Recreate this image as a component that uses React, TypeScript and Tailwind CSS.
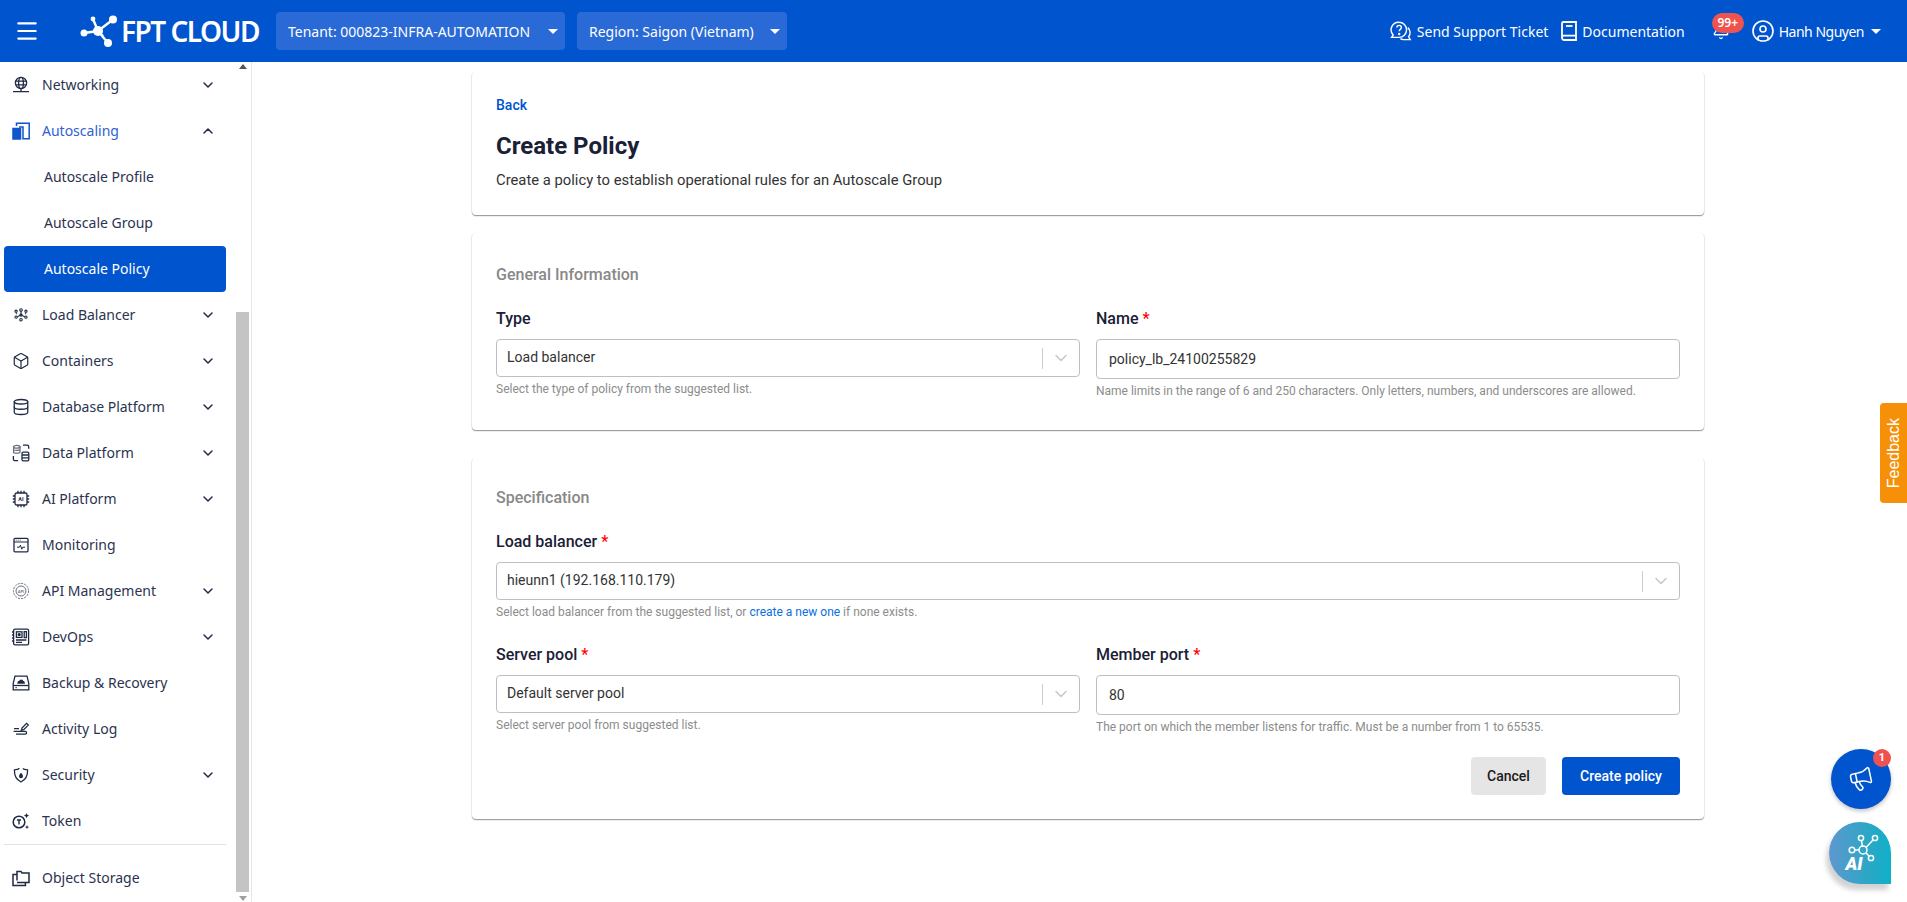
import type { ReactNode } from "react";
import { Bell, Box, ChevronDown, ChevronUp, CircleUser, Database, Megaphone, Menu } from "lucide-react";

const ink = "#1f2a44";

function Svg({ children, className }: { children: ReactNode; className?: string }) {
  return (
    <svg viewBox="0 0 18 18" width="18" height="18" fill="none" stroke={ink} strokeWidth="1.3" className={className}>
      {children}
    </svg>
  );
}

const NetworkIcon = () => (
  <Svg>
    <circle cx="9" cy="7" r="5.6" />
    <ellipse cx="9" cy="7" rx="2.4" ry="5.6" />
    <path d="M3.6 5.2h10.8M3.6 8.8h10.8M9 12.6v2.8M1 15.6h16" />
  </Svg>
);
const AutoscaleIcon = () => (
  <svg viewBox="0 0 18 18" width="18" height="18" fill="none" stroke="#0f55cc" strokeWidth="1.5">
    <path d="M1 6.5h7.5V17H1z" fill="#0f55cc" />
    <path d="M4.5 4V1.2h12.7V16.8H11V5h-4" />
  </svg>
);
const BalancerIcon = () => (
  <Svg className="scale-[0.85]">
    <circle cx="9" cy="3.2" r="1.5" />
    <circle cx="3.2" cy="4.6" r="1.3" />
    <circle cx="14.8" cy="4.6" r="1.3" />
    <circle cx="3.2" cy="11.5" r="1.3" />
    <circle cx="14.8" cy="11.5" r="1.3" />
    <circle cx="9" cy="14.6" r="1.5" />
    <circle cx="9" cy="9" r="1.3" fill={ink} />
    <path d="M9 5v2.6M4.5 11l3.2-1.4M13.5 11l-3.2-1.4M3 7.6h1.4M13.6 7.6H15" />
  </Svg>
);
const DataIcon = () => (
  <Svg>
    <ellipse cx="4.8" cy="2.8" rx="3.2" ry="1.4" stroke="#6b7280" />
    <path d="M1.6 2.8v5.6c0 .9 6.4.9 6.4 0V2.8M1.6 5.6c0 .9 6.4.9 6.4 0" stroke="#6b7280" />
    <path d="M11 1.2h4.2a1.5 1.5 0 0 1 1.5 1.5v2M1.4 12v3a1.7 1.7 0 0 0 1.7 1.7h3" />
    <rect x="10" y="8.2" width="6.8" height="8.6" rx="1.2" />
    <path d="M10 11h6.8M10 13.9h6.8" />
  </Svg>
);
const CpuIcon = () => (
  <Svg>
    <rect x="3" y="3" width="12" height="12" rx="1.6" />
    <path d="M6 .8V3M9 .8V3M12 .8V3M6 15v2.2M9 15v2.2M12 15v2.2M.8 6H3M.8 9H3M.8 12H3M15 6h2.2M15 9h2.2M15 12h2.2" />
    <text x="9" y="11" textAnchor="middle" fontSize="5.5" fontWeight="700" fill={ink} stroke="none" fontFamily="Roboto, sans-serif">
      AI
    </text>
  </Svg>
);
const MonitorIcon = () => (
  <Svg>
    <rect x="2" y="2.4" width="14" height="13.4" rx="1" />
    <path d="M2 6h14M3.8 4.2h.8M5.8 4.2h.8M7.8 4.2h.8M5 11.2h2.4l1-2 1.4 4 1-2H13" strokeWidth="1" />
  </Svg>
);
const ApiIcon = () => (
  <Svg>
    <g stroke="#6b7280" strokeWidth="1">
      <circle cx="9" cy="9" r="5" />
      <circle cx="9" cy="9" r="7.6" strokeDasharray="2.2 1" />
      <text x="9" y="10.6" textAnchor="middle" fontSize="4" fontWeight="700" fill="#6b7280" stroke="none" fontFamily="Roboto, sans-serif">
        API
      </text>
    </g>
  </Svg>
);
const DevOpsIcon = () => (
  <Svg>
    <rect x="1.6" y="1.2" width="15" height="15.6" rx="1.4" />
    <path d="M0 4h1.6M0 7h1.6M0 10h1.6M0 13h1.6" />
    <rect x="4.4" y="3.8" width="5.6" height="5.6" />
    <circle cx="7.2" cy="6.6" r="1" fill={ink} />
    <path d="M12.2 3.6h2.2v6h-2.2zM4 12h10.4M4 14.4h6" />
  </Svg>
);
const BackupIcon = () => (
  <Svg>
    <path d="M1.2 9.5 3 2.2h12l1.8 7.3v6.3H1.2z" />
    <path d="M1.2 11.5h15.6" />
    <path d="M6 9c0-1.4 1-1.6 1.6-1.6C8 5.7 10.4 5.7 10.8 7.4c.8 0 1.4.6 1.4 1.6z" fill={ink} />
    <path d="M3.5 13.6h1.2" />
  </Svg>
);
const LogIcon = () => (
  <Svg>
    <path d="m10 8 4.6-4.6 1.7 1.7L11.7 9.7l-2.4.6z" />
    <path d="M2 8.6h5M1.6 11.4h11.6c1.8 0 1.8 2.8 0 2.8H4" />
  </Svg>
);
const ShieldIcon = () => (
  <Svg>
    <path d="M2.4 3.6c2.5.4 3.8-.3 5-1.4M15.6 3.6C13 4 11.8 3.3 10.8 2.4M15.6 3.6c.2 6-1.6 10.2-6.6 12.4C4 13.8 2.2 9.6 2.4 3.6" />
    <path d="M9 6.8c1.4 1.6 2 2.4 2 3.4a2 2 0 0 1-4 0c0-1 .6-1.8 2-3.4z" fill={ink} stroke="none" />
  </Svg>
);
const TokenIcon = () => (
  <Svg>
    <circle cx="7" cy="10" r="5.8" strokeWidth="1.5" />
    <path d="M5 8h4M7 8v4.4" strokeWidth="1.4" />
    <path d="m14.5 1 .8 1.8 1.8.8-1.8.8-.8 1.8-.8-1.8-1.8-.8 1.8-.8zM15 13l.6 1.5 1.5.6-1.5.6-.6 1.5-.6-1.5-1.5-.6 1.5-.6z" fill={ink} stroke="none" />
  </Svg>
);
const StorageIcon = () => (
  <Svg>
    <path d="M5 11.6V2.4h4l1 1.6h7v9.4H5" strokeWidth="1.5" />
    <path d="M5 5.6H1v10.8h12.4v-3" strokeWidth="1.5" />
  </Svg>
);

type NavRow = { label: string; icon: ReactNode; chevron?: boolean };

const upperRows: NavRow[] = [
  { label: "Load Balancer", icon: <BalancerIcon />, chevron: true },
  { label: "Containers", icon: <Box size={18} color={ink} strokeWidth={1.6} />, chevron: true },
  { label: "Database Platform", icon: <Database size={18} color={ink} strokeWidth={1.7} />, chevron: true },
  { label: "Data Platform", icon: <DataIcon />, chevron: true },
  { label: "AI Platform", icon: <CpuIcon />, chevron: true },
  { label: "Monitoring", icon: <MonitorIcon /> },
  { label: "API Management", icon: <ApiIcon />, chevron: true },
  { label: "DevOps", icon: <DevOpsIcon />, chevron: true },
  { label: "Backup & Recovery", icon: <BackupIcon /> },
  { label: "Activity Log", icon: <LogIcon /> },
  { label: "Security", icon: <ShieldIcon />, chevron: true },
  { label: "Token", icon: <TokenIcon /> },
];

function Row({ label, icon, chevron }: NavRow) {
  return (
    <div className="flex h-[46px] items-center pl-2 pr-[10px] text-[14px] text-[#2c3350]">
      <span className="flex w-[18px] justify-center">{icon}</span>
      <span className="mb-[2px] ml-3 flex-1">{label}</span>
      {chevron ? <ChevronDown size={16} strokeWidth={2.2} color={ink} /> : null}
    </div>
  );
}

function Sidebar() {
  return (
    <aside className="flex h-full w-[252px] shrink-0 border-r border-[#e5e7eb] font-['Noto_Sans',sans-serif]">
      <nav className="w-[236px] shrink-0 pl-1 pr-[10px]">
        <Row label="Networking" icon={<NetworkIcon />} chevron />
        <div className="flex h-[46px] items-center pl-2 pr-[10px] text-[14px] text-[#2f62d6]">
          <span className="flex w-[18px] justify-center">
            <AutoscaleIcon />
          </span>
          <span className="mb-[2px] ml-3 flex-1">Autoscaling</span>
          <ChevronUp size={16} strokeWidth={2.2} color={ink} />
        </div>
        <div className="flex h-[46px] items-center pb-[2px] pl-10 text-[14px] text-[#2c3350]">Autoscale Profile</div>
        <div className="flex h-[46px] items-center pb-[2px] pl-10 text-[14px] text-[#2c3350]">Autoscale Group</div>
        <div className="flex h-[46px] items-center rounded-[4px] bg-[#0054ce] pb-[2px] pl-10 text-[14px] text-white">Autoscale Policy</div>
        {upperRows.map((row) => (
          <Row key={row.label} {...row} />
        ))}
        <div className="mb-[10px] h-px bg-[#dfe3ea]" />
        <Row label="Object Storage" icon={<StorageIcon />} />
      </nav>
      <div className="flex w-[13px] shrink-0 flex-col items-center">
        <div className="mt-[2px] h-0 w-0 border-x-[4px] border-b-[5px] border-x-transparent border-b-[#555]" />
        <div className="mt-[243px] h-[580px] w-full bg-[#c4c4c4]" />
        <div className="mt-[4px] h-0 w-0 border-x-[4px] border-t-[5px] border-x-transparent border-t-[#a0a0a0]" />
      </div>
    </aside>
  );
}

function Caret() {
  return <div className="h-0 w-0 border-x-[5px] border-t-[5px] border-x-transparent border-t-white" />;
}

function HeaderSelect({ label, className }: { label: string; className: string }) {
  return (
    <div className={`flex h-[38px] items-center justify-between rounded-[4px] bg-[#2a6ad6] pl-3 pr-[7px] text-[14px] text-white ${className}`}>
      <span>{label}</span>
      <Caret />
    </div>
  );
}

function Logo() {
  return (
    <div className="ml-10 flex w-[182px] items-center">
      <svg viewBox="0 0 40 32" width="40" height="32" fill="white" stroke="white" strokeWidth="2.4" className="shrink-0">
        <path d="M18 16 33 4.5M18 16 4 18M18 16l10 12M18 16 13 4M18 16l5 5" />
        <circle cx="18" cy="16" r="5" stroke="none" />
        <circle cx="33" cy="4.5" r="4" stroke="none" />
        <circle cx="4" cy="18" r="3.5" stroke="none" />
        <circle cx="28" cy="28" r="4" stroke="none" />
        <circle cx="13" cy="4" r="2.4" stroke="none" />
      </svg>
      <span className="ml-px whitespace-nowrap font-['Noto_Sans',sans-serif] text-[28px] font-semibold leading-none tracking-[-1.5px] text-white">
        FPT CLOUD
      </span>
    </div>
  );
}

function Header() {
  return (
    <header className="flex h-[62px] shrink-0 items-center bg-[#0054ce] font-['Noto_Sans',sans-serif]">
      <Menu size={26} color="white" strokeWidth={2} className="ml-[14px]" />
      <Logo />
      <HeaderSelect label="Tenant: 000823-INFRA-AUTOMATION" className="ml-[14px] w-[289px]" />
      <HeaderSelect label="Region: Saigon (Vietnam)" className="ml-[12px] w-[210px]" />
      <div className="ml-auto flex items-center pr-[26px] text-[14px] text-white">
        <svg viewBox="0 0 22 20" width="22" height="20" fill="none" stroke="white" strokeWidth="1.4">
          <path d="M9 1.2a7.6 7.6 0 0 1 0 15.2H1.6l1.6-2.4A7.6 7.6 0 0 1 9 1.2z" />
          <path d="M17.8 6.6a6.6 6.6 0 0 1 .8 9.2l1.6 2.8h-6.8a6 6 0 0 1-3-1" />
          <path d="M6.8 6.6c0-3 4.6-3 4.6 0 0 1.8-2.2 1.8-2.2 3.6" />
          <circle cx="9.2" cy="13" r=".5" fill="white" />
        </svg>
        <span className="ml-[5px]">Send Support Ticket</span>
        <svg viewBox="0 0 16 20" width="16" height="20" fill="none" stroke="white" strokeWidth="1.8" className="ml-[13px]">
          <path d="M1 16V2.4A1.4 1.4 0 0 1 2.4 1H15v18H3a2 2 0 0 1-2-2v-1a1.8 1.8 0 0 1 2-1.4h12" />
          <path d="M5 5h6.5" />
        </svg>
        <span className="ml-[5px]">Documentation</span>
        <div className="relative ml-[27px] flex w-[18px] justify-center">
          <Bell size={18} color="white" strokeWidth={1.8} />
          <span className="absolute left-0 top-[-9px] flex h-5 w-8 items-center justify-center rounded-full bg-[#ef5350] text-[12px] font-semibold">
            99+
          </span>
        </div>
        <CircleUser size={24} color="white" strokeWidth={1.6} className="ml-[21px]" />
        <span className="ml-1 tracking-[-0.5px]">Hanh Nguyen</span>
        <div className="ml-[7px]">
          <Caret />
        </div>
      </div>
    </header>
  );
}

function Card({ className, children }: { className: string; children: ReactNode }) {
  return (
    <section className={`rounded-[4px] bg-white px-6 shadow-[0_1px_1px_rgba(0,0,0,0.35),0_1px_2px_rgba(0,0,0,0.12),1px_0_1px_-1px_rgba(0,0,0,0.2),-1px_0_1px_-1px_rgba(0,0,0,0.2)] ${className}`}>
      {children}
    </section>
  );
}

function Label({ text, required }: { text: string; required?: boolean }) {
  return (
    <div className="mb-[9px] flex h-[22px] items-center text-[16px] font-medium text-[#1a2035]">
      {text}
      {required ? <span className="ml-1 text-[#f00]">*</span> : null}
    </div>
  );
}

function Helper({ children }: { children: ReactNode }) {
  return <p className="mt-1 h-4 text-[12px] leading-4 text-[#8c8c8c]">{children}</p>;
}

function FakeSelect({ value }: { value: string }) {
  return (
    <div className="flex h-[38px] items-center rounded-[4px] border border-[#bfbfbf] bg-white pl-[10px] text-[14px] text-[#333]">
      <span className="mb-px flex-1">{value}</span>
      <span className="h-[21px] w-px bg-[#cccccc]" />
      <ChevronDown size={20} color="#c4c4c4" strokeWidth={1.6} className="mx-[8px]" />
    </div>
  );
}

function TextInput({ value }: { value: string }) {
  return (
    <input
      readOnly
      value={value}
      className="block h-10 w-full rounded-[4px] border border-[#bfbfbf] bg-white px-3 text-[14px] text-[#333] outline-none"
    />
  );
}

function FloatingButtons() {
  return (
    <>
      <div className="absolute right-0 top-[403px] flex h-[100px] w-[27px] items-center justify-center rounded-l-[4px] bg-[#f79009]">
        <span className="rotate-180 font-['Liberation_Sans',sans-serif] text-[16px] text-white [writing-mode:vertical-rl]">Feedback</span>
      </div>
      <div className="absolute left-[1831px] top-[749px] flex h-[60px] w-[60px] items-center justify-center rounded-full bg-[#0054ce] shadow-[0_2px_4px_rgba(0,0,0,0.25)]">
        <Megaphone size={26} color="white" strokeWidth={1.4} className="-rotate-12" />
        <span className="absolute right-0 top-0 flex h-[18px] w-[18px] items-center justify-center rounded-full bg-[#ef5350] font-['Roboto',sans-serif] text-[11px] font-bold text-white">
          1
        </span>
      </div>
      <div className="absolute left-[1829px] top-[822px] h-[62px] w-[62px] rounded-[50%] rounded-br-none bg-[linear-gradient(90deg,#5f97cf,#2ea6c6_60%,#0fb0c9)] shadow-[-3px_6px_5px_rgba(0,0,0,0.18)]">
        <svg viewBox="0 0 62 62" width="62" height="62" fill="none" stroke="white" strokeWidth="1.5">
          <path d="m33.500 25-1-6.500M37 25.500l7-7.500M37 31l3.500 3.500M30 28h-4.500" />
          <circle cx="34" cy="28" r="4" />
          <circle cx="32" cy="16" r="2.600" />
          <circle cx="46" cy="16" r="2.600" />
          <circle cx="42" cy="36" r="2.600" />
          <circle cx="23" cy="28" r="2.800" />
          <text x="25" y="48" textAnchor="middle" fontSize="18" fontWeight="900" fontStyle="italic" fill="white" stroke="none" fontFamily="Roboto, sans-serif">
            AI
          </text>
        </svg>
      </div>
    </>
  );
}

export default function App() {
  return (
    <div className="relative flex h-[902px] w-[1907px] flex-col overflow-hidden bg-white">
      <Header />
      <div className="flex min-h-0 flex-1">
        <Sidebar />
        <main className="flex-1 pl-[220px] pt-[10px] font-['Roboto',sans-serif]">
          <div className="w-[1232px]">
            <Card className="pb-[25px] pt-[23px]">
              <a className="block h-5 text-[14px] font-medium leading-5 text-[#0054ce]">Back</a>
              <h1 className="mt-[15px] h-8 text-[24px] font-bold leading-8 text-[#1a2035]">Create Policy</h1>
              <p className="mt-2 h-5 text-[14.8px] leading-5 text-[#333]">Create a policy to establish operational rules for an Autoscale Group</p>
            </Card>
            <Card className="mt-[18px] pb-[31px] pt-8">
              <h2 className="mb-[23px] h-5 text-[16px] font-medium leading-5 text-[#888]">General Information</h2>
              <div className="grid grid-cols-2 gap-x-4">
                <div>
                  <Label text="Type" />
                  <FakeSelect value="Load balancer" />
                  <Helper>Select the type of policy from the suggested list.</Helper>
                </div>
                <div>
                  <Label text="Name" required />
                  <TextInput value="policy_lb_24100255829" />
                  <Helper>Name limits in the range of 6 and 250 characters. Only letters, numbers, and underscores are allowed.</Helper>
                </div>
              </div>
            </Card>
            <Card className="mt-[28px] pb-6 pt-[30px]">
              <h2 className="mb-[23px] h-5 text-[16px] font-medium leading-5 text-[#888]">Specification</h2>
              <Label text="Load balancer" required />
              <FakeSelect value="hieunn1 (192.168.110.179)" />
              <Helper>
                Select load balancer from the suggested list, or <span className="text-[#0a6fe0]">create a new one</span> if none exists.
              </Helper>
              <div className="mt-6 grid grid-cols-2 gap-x-4">
                <div>
                  <Label text="Server pool" required />
                  <FakeSelect value="Default server pool" />
                  <Helper>Select server pool from suggested list.</Helper>
                </div>
                <div>
                  <Label text="Member port" required />
                  <TextInput value="80" />
                  <Helper>The port on which the member listens for traffic. Must be a number from 1 to 65535.</Helper>
                </div>
              </div>
              <div className="mt-[22px] flex justify-end gap-4">
                <button className="h-[38px] w-[75px] rounded-[4px] bg-[#e5e5e5] text-[14px] font-medium text-[#1a1a1a]">Cancel</button>
                <button className="h-[38px] w-[118px] rounded-[4px] bg-[#0054ce] text-[14px] font-medium text-white">Create policy</button>
              </div>
            </Card>
          </div>
        </main>
      </div>
      <FloatingButtons />
    </div>
  );
}
